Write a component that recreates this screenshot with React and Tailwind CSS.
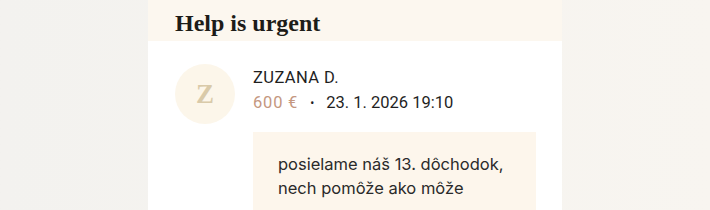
export default function App() {
  return (
    <div className="flex h-[210px] w-full justify-center overflow-hidden bg-gradient-to-r from-[#f3f2ef] to-[#f8f5f0]">
      <div className="flex w-[414px] flex-col bg-white">
        {/* header */}
        <div className="flex h-[42px] flex-col justify-end overflow-hidden bg-[#fcf7ef] pb-[3px] pl-[27px]">
          <h2 className="text-[24px] font-bold leading-[30px] text-[#1d1c18] [font-family:'Liberation_Serif',serif]">
            Help is urgent
          </h2>
        </div>

        {/* donation */}
        <div className="flex gap-[18px] pl-[27px] pt-[23px]">
          <div className="flex h-[60px] w-[60px] shrink-0 items-center justify-center rounded-full bg-[#fcf6ea]">
            <span className="text-[27px] font-bold text-[#d9caa9] [font-family:'Liberation_Serif',serif]">
              Z
            </span>
          </div>
          <div className="flex flex-col [font-family:Roboto,sans-serif]">
            <div className="mt-[3px] text-[16.5px] leading-[22px] tracking-[0.4px] text-[#1f1f1f]">
              ZUZANA D.
            </div>
            <div className="mt-[2px] flex items-center text-[16.5px] leading-[24px] text-[#1f1f1f]">
              <span className="tracking-[0.8px] text-[#c4977f]">600 €</span>
              <span className="mx-[12px] text-[12px]">•</span>
              <span>23. 1. 2026 19:10</span>
            </div>
            <div className="mt-[17px] w-[283px] bg-[#fdf6ec] pl-[25px] pr-[20px] pt-[20px] pb-[10px] text-[16.5px] leading-[24px] text-[#2a2a2a] [font-family:Inter,sans-serif]">
              posielame náš 13. dôchodok,
              <br />
              nech pomôže ako môže
            </div>
          </div>
        </div>
      </div>
    </div>
  );
}
